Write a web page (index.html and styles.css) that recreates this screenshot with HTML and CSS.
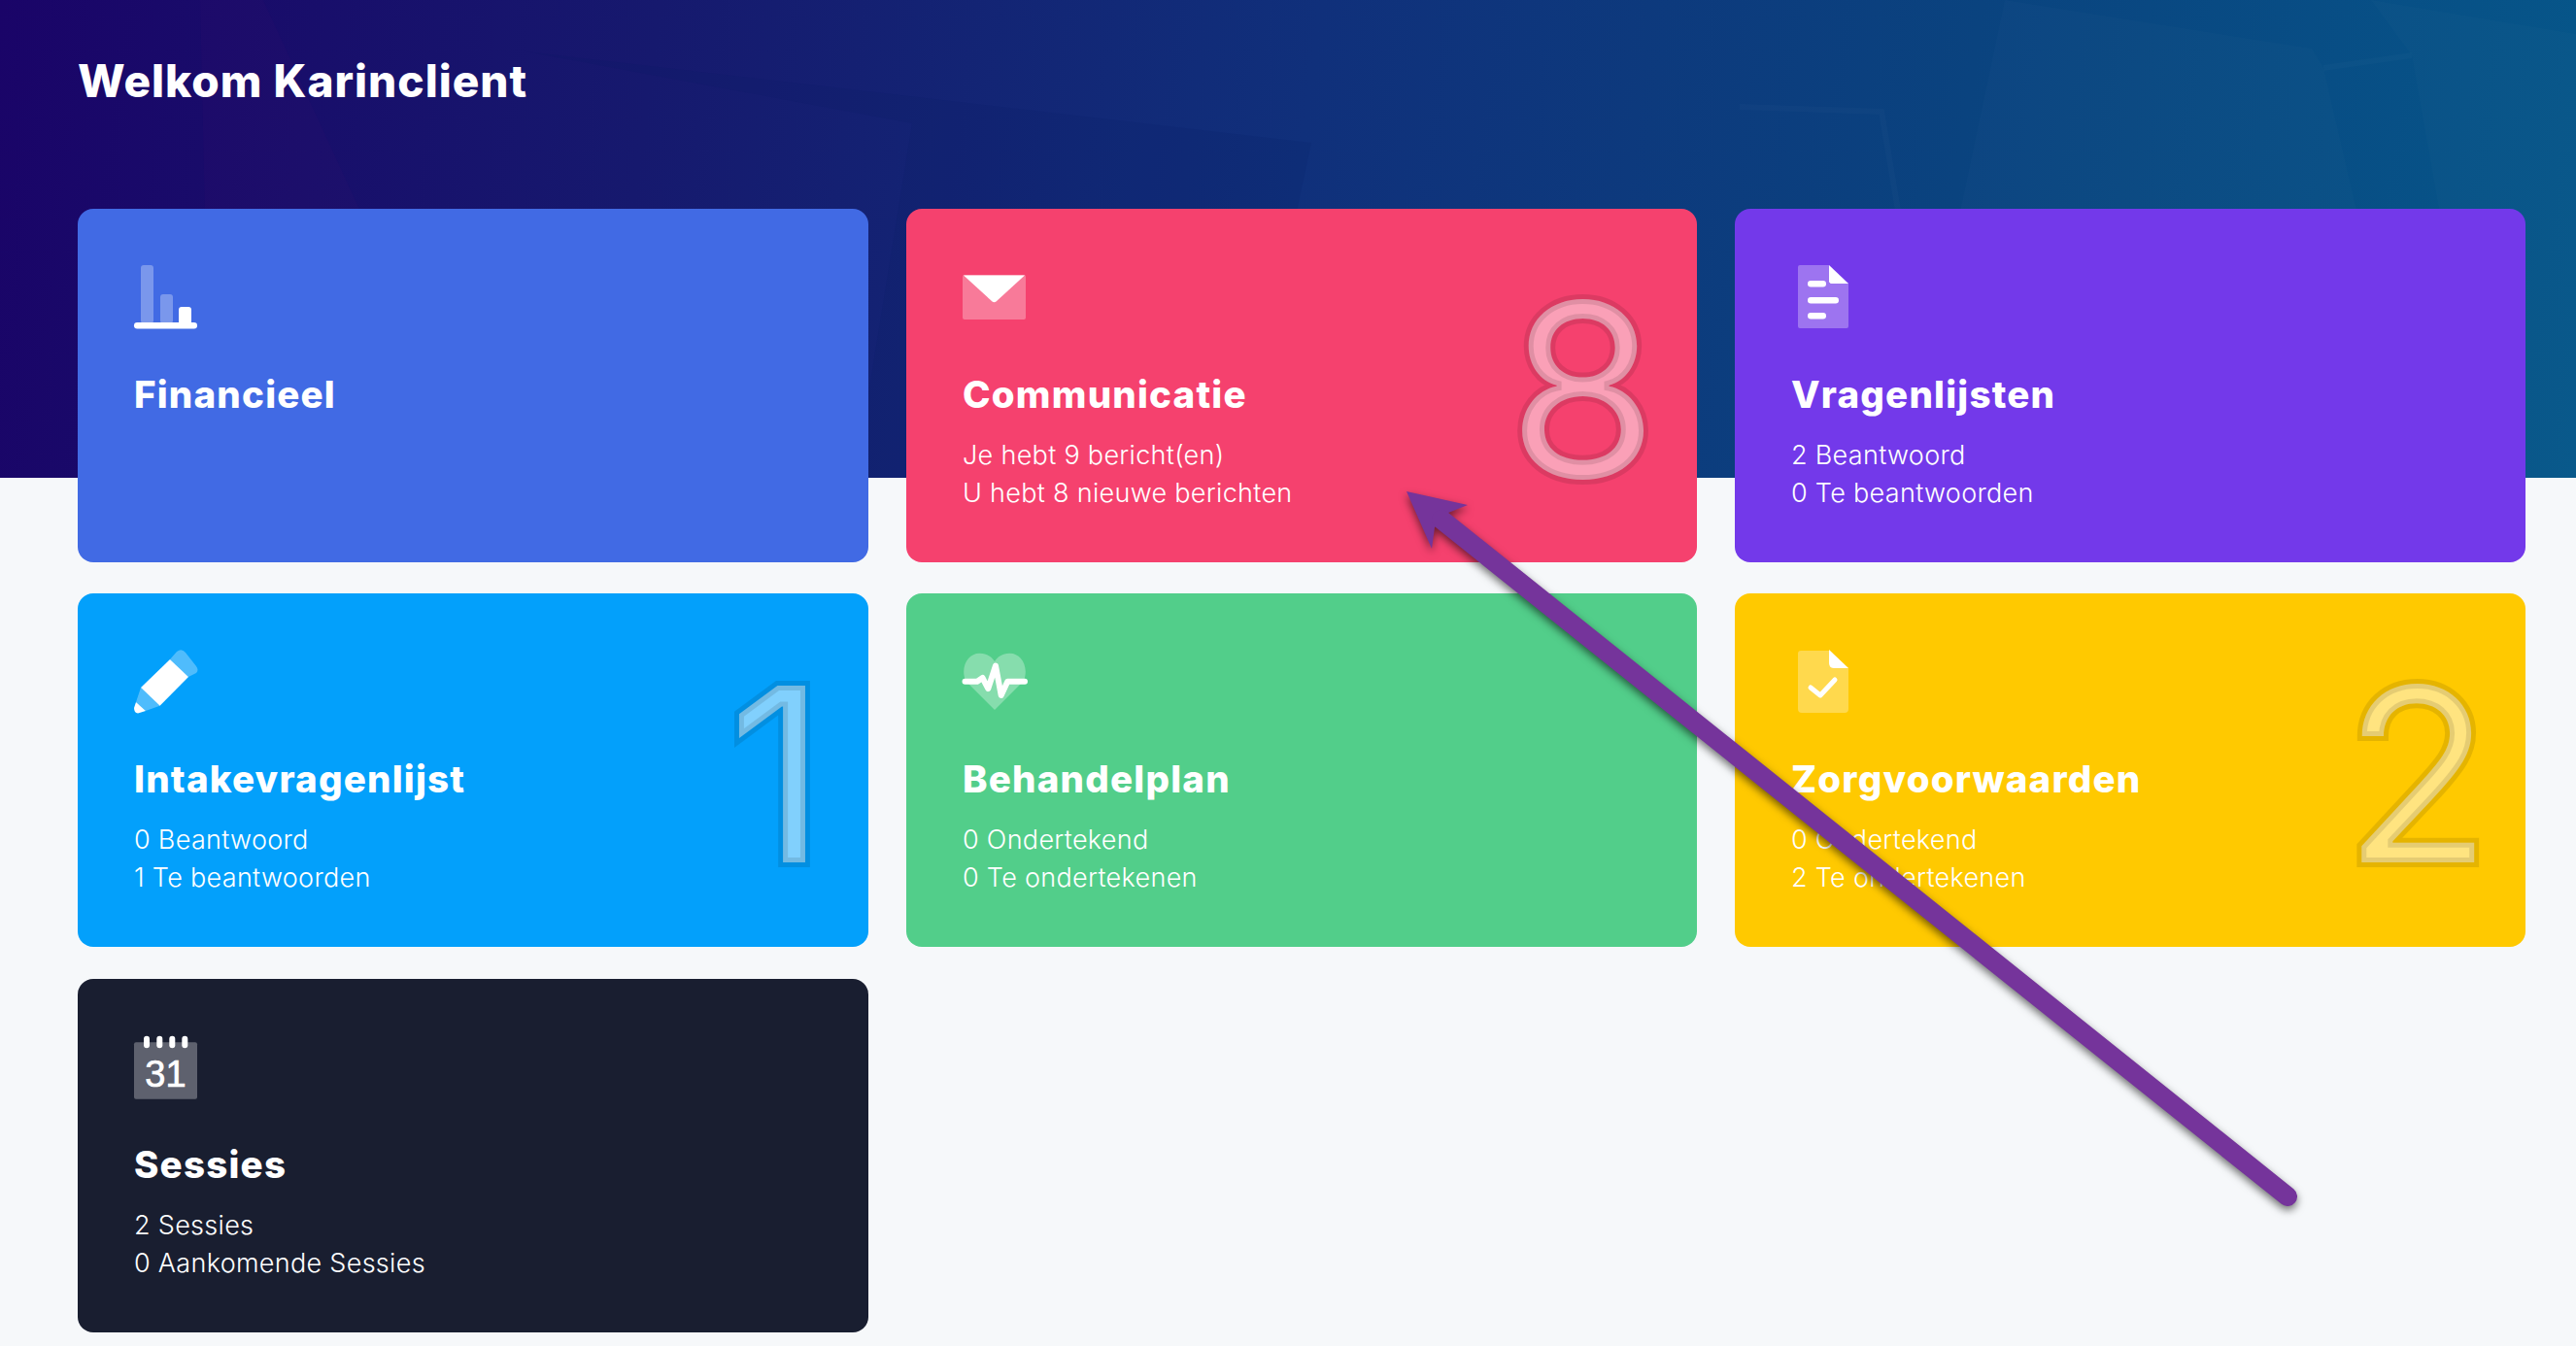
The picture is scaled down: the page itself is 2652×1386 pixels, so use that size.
FILE: index.html
```html
<!DOCTYPE html>
<html lang="en">

<head>
    <meta charset="UTF-8">
    <title>Dashboard</title>
    <link rel="stylesheet" href="styles.css">
</head>

<body>

    <!-- faint facets in the header background -->
    <svg class="facets" viewBox="0 0 2652 492">
        <path class="facet-dark" d="M541 53 L1350 147 L1277 492 H880 L939 127 Z" />
        <path class="facet-purple" d="M206 0 H271 L369 213 L420 492 H217 Z" />
        <path class="facet-light" d="M2064 0 L2380 50 L2392 70 L2490 492 H1960 Z" />
        <path class="facet-light" d="M2441 0 L2652 35 V492 H2560 L2483 57 Z" />
        <path class="facet-edge" d="M1791 110 L1937 115 L2000 492" />
        <path class="facet-edge" d="M2392 70 L2483 57" />
    </svg>

    <header class="welcome">
        <h1>Welkom Karinclient</h1>
    </header>

    <main class="cards">

        <a class="card card-blue">
            <svg class="icon" viewBox="0 0 66 66">
                <rect class="soft" x="7" y="0" width="13" height="60" rx="3" />
                <rect class="soft" x="27" y="30" width="13" height="30" rx="3" />
                <rect class="solid" x="46" y="43" width="13" height="18" rx="3" />
                <rect class="solid" x="0" y="59" width="65" height="6.5" rx="3.2" />
            </svg>
            <h2>Financieel</h2>
        </a>

        <a class="card card-pink">
            <svg class="icon" viewBox="0 0 66 66">
                <rect class="soft" x="0" y="10" width="65" height="46" rx="2" />
                <path class="solid" d="M1 10.5 H64 L34.5 37.5 Q32.5 39 30.5 37.5 Z" />
            </svg>
            <h2>Communicatie</h2>
            <p>Je hebt 9 bericht(en)</p>
            <p>U hebt 8 nieuwe berichten</p>
            <span class="count">8</span>
        </a>

        <a class="card card-purple">
            <svg class="icon" viewBox="0 0 66 66">
                <path class="soft" d="M9 0 H39 V19 H59 V63 Q59 65 57 65 H9 Q7 65 7 63 V2 Q7 0 9 0 Z" />
                <path class="solid" d="M39 0 L59 19 H41 Q39 19 39 17 Z" />
                <rect class="solid" x="17" y="16" width="19" height="6.5" rx="3.2" />
                <rect class="solid" x="17" y="33" width="32" height="6.5" rx="3.2" />
                <rect class="solid" x="17" y="49" width="19" height="6.5" rx="3.2" />
            </svg>
            <h2>Vragenlijsten</h2>
            <p>2 Beantwoord</p>
            <p>0 Te beantwoorden</p>
        </a>

        <a class="card card-sky">
            <svg class="icon" viewBox="0 0 66 66">
                <path class="soft" d="M37 10 L44 2 Q49 -2 53 3 L64 17 Q67 21 64 24 L56 28 Z" />
                <path class="solid" d="M37 10 L56 28 L26.6 57.7 L7 39 Z" />
                <path class="soft" d="M7 39 L26.6 57.7 L12 63 L2 54 Z" />
                <path class="solid" d="M2 54 L12 63 L4 65.5 Q0 65 0 60 Z" />
            </svg>
            <h2>Intakevragenlijst</h2>
            <p>0 Beantwoord</p>
            <p>1 Te beantwoorden</p>
            <span class="count count-1">1</span>
        </a>

        <a class="card card-green">
            <svg class="icon" viewBox="0 0 66 66">
                <path class="soft" d="M33 62 L3 32 C-3 16 7 3 18 3.7 C25 4 30 7 33 12 C36 7 41 4 48 3.7 C59 3 69 16 63 32 Z" />
                <path class="pulse" d="M2.5 32.7 H15 L20.5 29 L26.3 40 L34 16.5 L39.7 47 L46.3 32.7 H64" />
            </svg>
            <h2>Behandelplan</h2>
            <p>0 Ondertekend</p>
            <p>0 Te ondertekenen</p>
        </a>

        <a class="card card-yellow">
            <svg class="icon" viewBox="0 0 66 66">
                <path class="soft" d="M10 1 H39 V14 Q39 19 44 19 H59 V61 Q59 65 55 65 H11 Q7 65 7 61 V4 Q7 1 10 1 Z" />
                <path class="solid" d="M39 0 L59 19 H44 Q39 19 39 14 Z" />
                <path class="check" d="M20 39 L30 47 L45 31" />
            </svg>
            <h2>Zorgvoorwaarden</h2>
            <p>0 Ondertekend</p>
            <p>2 Te ondertekenen</p>
            <span class="count count-2">2</span>
        </a>

        <a class="card card-dark">
            <svg class="icon" viewBox="0 0 66 66">
                <rect class="soft" x="0" y="7.3" width="65" height="58.4" rx="2" />
                <rect class="solid" x="10" y="0.7" width="6" height="12.6" rx="3" />
                <rect class="solid" x="23.3" y="0.7" width="6" height="12.6" rx="3" />
                <rect class="solid" x="36.3" y="0.7" width="6" height="12.6" rx="3" />
                <rect class="solid" x="49.3" y="0.7" width="6" height="12.6" rx="3" />
                <text class="cal-day" x="32.5" y="53">31</text>
            </svg>
            <h2>Sessies</h2>
            <p>2 Sessies</p>
            <p>0 Aankomende Sessies</p>
        </a>

    </main>

    <!-- annotation arrow drawn over the screenshot -->
    <svg class="arrow" viewBox="0 0 2652 1386">
        <path class="arrow-head" d="M1448 506 L1511 520 L1491 528 L1477 543 L1474 565 Z" />
        <path class="arrow-line" d="M1484 535 L2355 1232" />
    </svg>

</body>

</html>
```

FILE: styles.css
```css
* {
    box-sizing: border-box;
}

html,
body {
    height: 100%;
}

body {
    position: relative;
    margin: 0;
    overflow: hidden;
    padding: 0 52px 0 80px;
    font-family: Inter, "Open Sans", sans-serif;
    color: #fff;
    background-color: #f6f8fa;
    background-image: linear-gradient(98deg, #1a0468 0%, #16196e 25%, #10307b 50%, #0a437f 75%, #06578a 100%);
    background-repeat: no-repeat;
    background-size: 100% 492px;
}

.facets {
    position: absolute;
    top: 0;
    left: 0;
    width: 2652px;
    height: 492px;
    z-index: -1;
}

.facet-dark {
    fill: rgba(5, 25, 100, .14);
}

.facet-purple {
    fill: rgba(120, 20, 120, .04);
}

.facet-light {
    fill: rgba(255, 255, 255, .014);
}

.facet-edge {
    fill: none;
    stroke: rgba(255, 255, 255, .018);
    stroke-width: 6;
}

.welcome {
    height: 215px;
    padding-top: 57px;
}

h1 {
    margin: 0;
    font-size: 46px;
    line-height: 52px;
    font-weight: 800;
    letter-spacing: 1px;
}

.cards {
    display: grid;
    grid-template-columns: repeat(3, 814px);
    grid-auto-rows: 364px;
    column-gap: 39px;
    row-gap: 32.4px;
}

.card {
    position: relative;
    display: block;
    padding: 58px;
    border-radius: 16px;
    overflow: hidden;
}

.card-blue {
    background-color: #416ae4;
}

.card-pink {
    background-color: #f5416e;
}

.card-purple {
    background-color: #7339ea;
}

.card-sky {
    background-color: #03a0fb;
}

.card-green {
    background-color: #52ce8a;
}

.card-yellow {
    background-color: #ffc900;
}

.card-dark {
    background-color: #191e30;
}

.icon {
    display: block;
    width: 66px;
    height: 66px;
    overflow: visible;
}

.soft {
    fill: rgba(255, 255, 255, .3);
}

.solid {
    fill: #fff;
}

.pulse,
.check {
    fill: none;
    stroke: #fff;
    stroke-width: 6;
    stroke-linecap: round;
    stroke-linejoin: round;
}

.check {
    stroke-width: 5;
}

.cal-day {
    font-family: "Liberation Sans", sans-serif;
    font-size: 38px;
    fill: #fff;
    stroke: #fff;
    stroke-width: .7;
    text-anchor: middle;
}

h2 {
    margin: 39px 0 15px;
    font-size: 38.5px;
    line-height: 56px;
    font-weight: 800;
    letter-spacing: 1.2px;
}

p {
    margin: 0;
    font-size: 27px;
    line-height: 39px;
    font-weight: 350;
    letter-spacing: .3px;
}

.count {
    position: absolute;
    top: 36px;
    right: 40px;
    font-size: 250px;
    line-height: 300px;
    font-weight: 400;
    color: rgba(255, 255, 255, .5);
    -webkit-text-stroke: 10px rgba(0, 0, 0, .1);
}

.count-1 {
    right: 43px;
}

.count-2 {
    right: 35px;
}

.arrow {
    position: absolute;
    top: 0;
    left: 0;
    width: 2652px;
    height: 1386px;
    filter: drop-shadow(0 4px 4px rgba(0, 0, 0, .55));
    pointer-events: none;
}

.arrow-head {
    fill: #75349b;
}

.arrow-line {
    fill: none;
    stroke: #75349b;
    stroke-width: 20;
    stroke-linecap: round;
}
```
